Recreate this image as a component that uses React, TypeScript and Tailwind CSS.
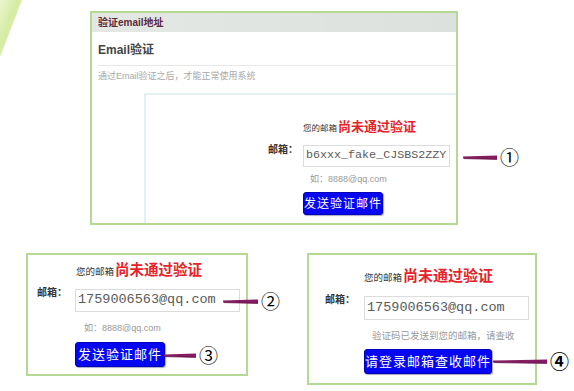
import React from 'react';

const cjk = "font-['Liberation_Sans','Noto_Sans_CJK_SC',sans-serif]";

// tapered purple pointer line used by the numbered callouts
function Pointer({ x, y, w, n, bold }: { x: number; y: number; w: number; n: string; bold?: boolean }) {
  return (
    <div className="absolute flex items-center" style={{ left: x, top: y - 10 }}>
      <svg width={w} height={20} viewBox={`0 0 ${w} 20`}>
        <polygon points={`1,9.5 ${w},8.5 ${w},12.5 1,11.5`} fill="#861c60" />
        <line x1="2" y1="11.6" x2={w} y2="12.3" stroke="#5e0f42" strokeWidth="0.8" />
      </svg>
      <span
        className={`ml-[3px] text-[19px] leading-[20px] text-black ${bold ? 'font-bold' : ''} font-['Noto_Sans_CJK_SC',sans-serif]`}
      >
        {n}
      </span>
    </div>
  );
}

function Status({ small, big }: { small: string; big: string }) {
  return (
    <div className="flex items-baseline leading-[18px]">
      <span className={`${small} text-[#333]`}>您的邮箱</span>
      <span className={`${big} font-bold text-[#e6222a] ml-[1px]`}>尚未通过验证</span>
    </div>
  );
}

function EmailBox({ value, cls }: { value: string; cls: string }) {
  return (
    <div
      className={`${cls} border border-[#dcdcdc] bg-white flex items-center pl-[2px] overflow-hidden whitespace-nowrap text-[#5a5a5a] font-['Liberation_Mono',monospace]`}
    >
      {value}
    </div>
  );
}

function BlueButton({ label, cls }: { label: string; cls: string }) {
  return (
    <div
      className={`${cls} bg-[#0606f2] border border-[#0000b8] rounded-[3px] text-white flex items-center justify-center tracking-[1px] shadow-[1px_1px_1px_rgba(0,0,80,0.35)]`}
    >
      {label}
    </div>
  );
}

function TopPanel() {
  return (
    <div className="w-[368px] h-[214px] border-2 border-[#b5d893] flex flex-col bg-white">
      <div className="h-[19px] bg-gradient-to-r from-[#e4e8e5] to-[#dce1de] pl-[6px] text-[10px] leading-[19px] font-bold text-[#5a2a3b]">
        验证email地址
      </div>
      <div className="ml-[6px] h-[34px] flex items-end pb-[8px] border-b border-[#e8e8e8] text-[12px] leading-[14px] text-[#444] font-semibold">
        Email验证
      </div>
      <div className="ml-[6px] h-[27px] pt-[5px] text-[9px] leading-[11px] text-[#a8a8a8]">
        通过Email验证之后，才能正常使用系统
      </div>
      <div className="ml-[52px] flex-1 border-l-2 border-t-2 border-[#e3f0f6]">
        <div className="pl-[122px] pt-[23px] flex flex-col">
          <div className="pl-[35px]">
            <Status small="text-[8.5px]" big="text-[13px]" />
          </div>
          <div className="flex items-start mt-[8px]">
            <div className="w-[35px] text-[10px] leading-[10px] font-bold text-[#333]">邮箱：</div>
            <EmailBox value="b6xxx_fake_CJSBS2ZZY" cls="w-[147px] h-[22px] text-[11.7px]" />
          </div>
          <div className="pl-[42px] mt-[6px] text-[9px] leading-[12px] text-[#999]">如：8888@qq.com</div>
          <div className="pl-[35px] mt-[7px]">
            <BlueButton label="发送验证邮件" cls="w-[80px] h-[23px] text-[12px]" />
          </div>
        </div>
      </div>
    </div>
  );
}

function LeftPanel() {
  return (
    <div className="w-[222px] h-[123px] border-2 border-[#b5d893] bg-white pl-[9px] pt-[6px] flex flex-col">
      <div className="pl-[39px]">
        <Status small="text-[9.5px]" big="text-[14.5px]" />
      </div>
      <div className="flex items-start mt-[8px]">
        <div className="w-[38px] text-[10px] leading-[10px] font-bold text-[#333] mt-[-1px]">邮箱：</div>
        <EmailBox value="1759006563@qq.com" cls="w-[165px] h-[23px] text-[13.5px]" />
      </div>
      <div className="pl-[47px] mt-[10px] text-[9px] leading-[12px] text-[#999]">如：8888@qq.com</div>
      <div className="pl-[38px] mt-[8px]">
        <BlueButton label="发送验证邮件" cls="w-[90px] h-[25px] text-[13px]" />
      </div>
    </div>
  );
}

function RightPanel() {
  return (
    <div className="w-[230px] h-[132px] border-2 border-[#b5d893] bg-white pl-[16px] pt-[12px] flex flex-col">
      <div className="pl-[39px]">
        <Status small="text-[9.5px]" big="text-[15px]" />
      </div>
      <div className="flex items-start mt-[9px]">
        <div className="w-[39px] text-[10px] leading-[10px] font-bold text-[#333] mt-[-1px]">邮箱：</div>
        <EmailBox value="1759006563@qq.com" cls="w-[165px] h-[24px] text-[13.5px]" />
      </div>
      <div className="pl-[47px] mt-[10px] text-[9.5px] leading-[12px] text-[#999]">验证码已发送到您的邮箱，请查收</div>
      <div className="pl-[39px] mt-[7px]">
        <BlueButton label="请登录邮箱查收邮件" cls="w-[128px] h-[25px] text-[13px]" />
      </div>
    </div>
  );
}

export default function App() {
  return (
    <div className={`relative w-[574px] h-[391px] overflow-hidden bg-white ${cjk}`}>
      {/* green swoosh in the corner */}
      <svg className="absolute left-0 top-0" width="40" height="70" viewBox="0 0 40 70">
        <defs>
          <linearGradient id="sw" x1="0" y1="0" x2="1" y2="1">
            <stop offset="0" stopColor="#eaf6cf" />
            <stop offset="0.4" stopColor="#d5eca4" />
            <stop offset="1" stopColor="#e4f3c2" />
          </linearGradient>
        </defs>
        <polygon points="0,0 22,0 0,57" fill="url(#sw)" />
      </svg>

      <div className="relative pt-[11px] pl-[90px]">
        <TopPanel />
      </div>
      <div className="relative flex items-start pl-[26px] pt-[28px] gap-[59px]">
        <LeftPanel />
        <RightPanel />
      </div>

      <Pointer x={462} y={157} w={35} n="①" />
      <Pointer x={222} y={301} w={36} n="②" />
      <Pointer x={163} y={355} w={33} n="③" />
      <Pointer x={492} y={361} w={55} n="④" bold />
    </div>
  );
}
